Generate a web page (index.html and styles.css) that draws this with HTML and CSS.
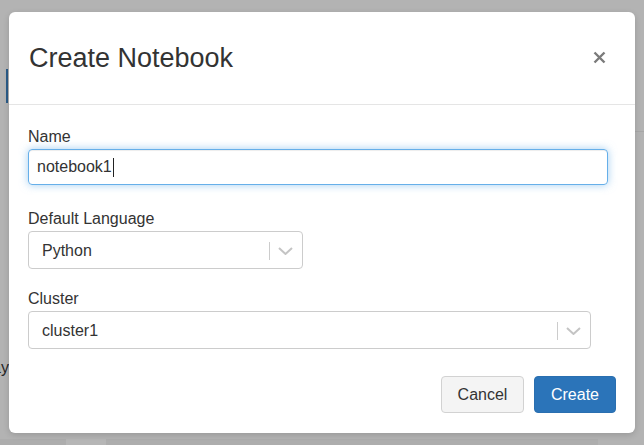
FILE: index.html
```html
<!DOCTYPE html>
<html>
<head>
<meta charset="utf-8">
<link rel="stylesheet" href="styles.css">
</head>
<body>
<div class="page">
  <div class="page-tab"></div>
  <div class="page-text">ay)</div>
  <div class="page-rule"></div>
  <div class="page-bottom">
    <div class="seg seg-a"></div>
    <div class="seg seg-b"></div>
    <div class="seg seg-c"></div>
    <div class="seg seg-d"></div>
  </div>
</div>

<div class="modal">
  <div class="modal-header">
    <h1 class="modal-title">Create Notebook</h1>
    <button class="close" aria-label="Close">
      <svg width="13" height="13" viewBox="0 0 13 13"><path d="M1.5 1.5 L11.5 11.5 M11.5 1.5 L1.5 11.5" stroke="#7b7b7b" stroke-width="2.4" stroke-linecap="butt" fill="none"/></svg>
    </button>
  </div>
  <div class="modal-body">
    <div class="group group-name">
      <label class="label">Name</label>
      <div class="input focus"><span>notebook1</span><span class="caret"></span></div>
    </div>
    <div class="group group-lang">
      <label class="label">Default Language</label>
      <div class="select select-lang">
        <span class="select-value">Python</span>
        <span class="sep"></span>
        <svg class="chev" width="15" height="8" viewBox="0 0 15 8"><path d="M1 1 L7.5 7 L14 1" stroke="#c4c4c4" stroke-width="2" fill="none"/></svg>
      </div>
    </div>
    <div class="group group-cluster">
      <label class="label">Cluster</label>
      <div class="select select-cluster">
        <span class="select-value">cluster1</span>
        <span class="sep"></span>
        <svg class="chev" width="15" height="8" viewBox="0 0 15 8"><path d="M1 1 L7.5 7 L14 1" stroke="#c4c4c4" stroke-width="2" fill="none"/></svg>
      </div>
    </div>
  </div>
  <div class="modal-footer">
    <button class="btn btn-default">Cancel</button>
    <button class="btn btn-primary">Create</button>
  </div>
</div>
</body>
</html>
```

FILE: styles.css
```css
* { box-sizing: border-box; }
html, body {
  margin: 0;
  padding: 0;
  width: 644px;
  height: 445px;
  overflow: hidden;
  background: #b3b3b3;
  font-family: "Liberation Sans", Arial, sans-serif;
  color: #333;
}
.page { position: relative; width: 644px; height: 445px; }
.page-tab {
  position: absolute; left: 6px; top: 69px; width: 2px; height: 34px;
  background: #2a5b88;
}
.page-text {
  position: absolute; left: -8px; top: 358px;
  font-size: 16px; line-height: 20px; color: #262626;
}
.page-rule {
  position: absolute; left: 635px; top: 131px; width: 9px; height: 1px;
  background: #a7a7a7;
}
.page-bottom {
  position: absolute; left: 0; top: 439px; width: 644px; height: 6px;
  display: flex;
}
.seg { height: 6px; }
.seg-a { width: 66px; background: #adadad; }
.seg-b { width: 40px; background: #b6b6b6; }
.seg-c { width: 492px; background: #adadad; }
.seg-d { flex: 1; background: #b3b3b3; }

.modal {
  position: absolute;
  left: 9px; top: 12px;
  width: 626px; height: 421px;
  background: #fff;
  border-radius: 6px;
  box-shadow: 0 2px 6px rgba(0,0,0,0.15);
  display: flex;
  flex-direction: column;
}
.modal-header {
  height: 93px;
  border-bottom: 1px solid #e5e5e5;
  display: flex;
  align-items: center;
  justify-content: space-between;
  padding: 0 29px 0 20px;
}
.modal-title {
  margin: 0;
  font-size: 27px;
  font-weight: normal;
  line-height: 31px;
  color: #333;
}
.close {
  border: 0; background: none; padding: 0; margin: 0;
  width: 13px; height: 13px;
  display: block;
  margin-top: -2px;
}
.close svg { display: block; }

.modal-body {
  padding: 23px 19px 0 19px;
}
.group { display: flex; flex-direction: column; align-items: flex-start; }
.group-lang { margin-top: 25px; }
.group-cluster { margin-top: 21px; }
.label {
  font-size: 16px;
  line-height: 18px;
  margin-bottom: 3px;
  color: #333;
}
.input {
  width: 580px;
  height: 36px;
  border: 1px solid #66afe9;
  border-radius: 4px;
  padding: 0 8px;
  display: flex;
  align-items: center;
  font-size: 16px;
  color: #333;
  box-shadow: inset 0 1px 1px rgba(0,0,0,0.075), 0 0 8px rgba(102,175,233,0.6);
}
.caret {
  display: inline-block;
  width: 1px;
  height: 19px;
  background: #222;
  margin-left: 1px;
}
.select {
  height: 38px;
  border: 1px solid #cccccc;
  border-radius: 4px;
  display: flex;
  align-items: center;
  padding: 1px 9px 0 13px;
  font-size: 16px;
  color: #333;
}
.select-lang { width: 275px; }
.select-cluster { width: 563px; }
.select-value { flex: 1; }
.sep {
  width: 1px;
  height: 18px;
  background: #cccccc;
}
.chev { display: block; margin-left: 8px; }

.modal-footer {
  margin-top: auto;
  padding: 0 19px 20px 0;
  display: flex;
  justify-content: flex-end;
  gap: 10px;
}
.btn {
  height: 37px;
  border-radius: 4px;
  font-family: "Liberation Sans", Arial, sans-serif;
  font-size: 16px;
  padding: 0;
  display: flex;
  align-items: center;
  justify-content: center;
}
.btn-default {
  width: 83px;
  background: #f4f4f4;
  border: 1px solid #d2d2d2;
  color: #333;
}
.btn-primary {
  width: 82px;
  background: #2b74b9;
  border: 1px solid #2a6fb0;
  color: #fff;
}
```
